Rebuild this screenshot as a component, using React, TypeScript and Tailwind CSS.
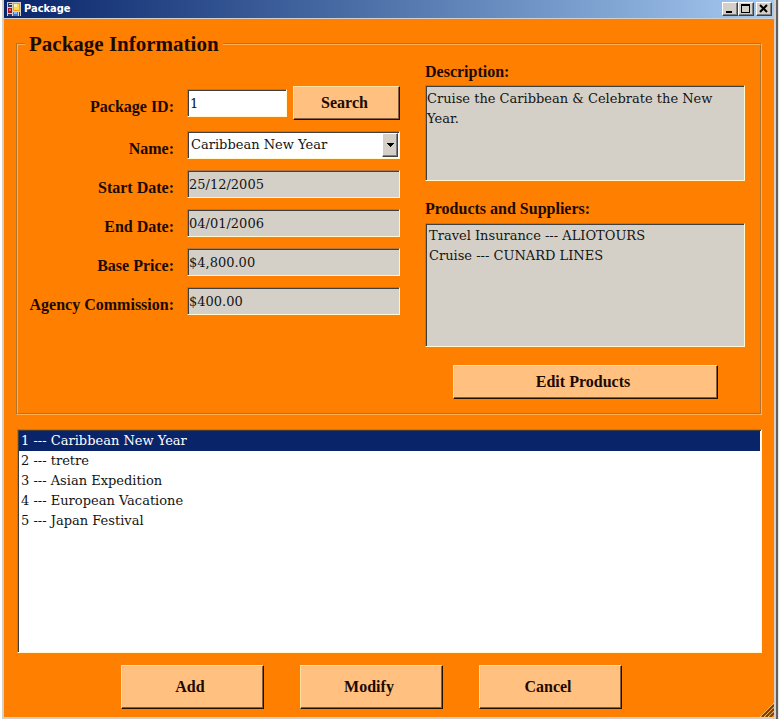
import { useState } from "react";
import type { ReactNode } from "react";

const sunken =
  "border border-t-[#b07840] border-l-[#b07840] border-r-[#fff8d0] border-b-[#fff8d0] shadow-[inset_1px_1px_0_#404040]";
const bodyText = "font-['DejaVu_Serif',serif] text-[13px] leading-5";
const labelText = "font-['Liberation_Serif',serif] text-[16px] font-bold leading-5 text-[#1c0a00]";

function PushButton({ className, children }: { className: string; children: ReactNode }) {
  return (
    <button
      type="button"
      className={`border border-t-[#ffe0a0] border-l-[#ffe0a0] border-r-[#201000] border-b-[#201000] bg-[#ffc080] pr-1 shadow-[inset_-1px_-1px_0_#806040] ${labelText} ${className}`}
    >
      {children}
    </button>
  );
}

function CaptionButton({ label, children }: { label: string; children: ReactNode }) {
  return (
    <button
      type="button"
      aria-label={label}
      className="h-3.5 w-4 border border-t-white border-l-white border-r-[#404040] border-b-[#404040] bg-[#d4d0c8] shadow-[inset_-1px_-1px_0_#808080]"
    >
      <svg viewBox="0 0 14 12" className="h-3 w-3.5" fill="none" stroke="#000" shapeRendering="crispEdges">
        {children}
      </svg>
    </button>
  );
}

function ReadOnlyRow({ id, label, value }: { id: string; label: string; value: string }) {
  return (
    <>
      <label htmlFor={id} className={`pt-2 text-right whitespace-nowrap ${labelText}`}>
        {label}
      </label>
      <input
        id={id}
        readOnly
        defaultValue={value}
        className={`h-7 w-full bg-[#d4d0c8] px-px text-[#141414] ${sunken} ${bodyText}`}
      />
    </>
  );
}

const packages = ["Caribbean New Year", "tretre", "Asian Expedition", "European Vacatione", "Japan Festival"];

export default function App() {
  const [selected, setSelected] = useState(0);

  return (
    <div className="flex min-h-screen bg-white text-[#141414]">
      <div className="flex flex-1 flex-col border-r-2 border-[#606060] bg-[#d4d0c8] pr-0.5 pb-0.5 pl-1 shadow-[inset_2px_0_0_#fff]">
        <header className="flex h-[18px] items-center bg-linear-to-r from-[#0a246a] to-[#a6caf0] pr-0.5 pl-[3px]">
          <svg viewBox="0 0 14 14" className="mr-[3px] size-3.5" shapeRendering="crispEdges" aria-hidden="true">
            <rect width="14" height="14" fill="#d4d0c8" />
            <rect x="1" y="1" width="4" height="4" fill="#26386e" />
            <rect x="2" y="2" width="3" height="1" fill="#d4d0c8" />
            <rect x="6" y="1" width="7" height="8" fill="#f0a010" />
            <rect x="7" y="2" width="5" height="6" fill="#ffd850" />
            <rect x="7" y="2" width="3" height="3" fill="#fff0a0" />
            <rect x="1" y="6" width="4" height="5" fill="#a01818" />
            <rect x="2" y="7" width="2" height="2" fill="#e86050" />
            <rect x="6" y="10" width="5" height="4" fill="#4078d8" />
            <rect x="7" y="10" width="3" height="2" fill="#90b8f8" />
            <rect x="1" y="12" width="4" height="2" fill="#26386e" />
            <rect x="12" y="10" width="1" height="4" fill="#26386e" />
          </svg>
          <h1 className="flex-1 font-['DejaVu_Sans_Condensed','DejaVu_Sans',sans-serif] text-[11px] leading-4 font-bold text-white">
            Package
          </h1>
          <CaptionButton label="Minimize">
            <path d="M3 9h6" strokeWidth="2" />
          </CaptionButton>
          <CaptionButton label="Maximize">
            <path d="M2.5 2v8M10.5 2v8M2 9.5h9" />
            <path d="M2 2h9" strokeWidth="2" />
          </CaptionButton>
          <span className="w-0.5" />
          <CaptionButton label="Close">
            <path d="M3 2l7 7M10 2l-7 7" strokeWidth="2" shapeRendering="auto" />
          </CaptionButton>
        </header>

        <main className="relative mt-px flex flex-1 flex-col bg-[#ff8000] pt-[11px] pr-3 pb-2 pl-3">
          <fieldset className="flex border-2 border-[#ffb050] pr-[15px] pb-3.5 [border-style:groove]">
            <legend className="ml-[7px] px-1 font-['Liberation_Serif',serif] text-[21px] leading-7 font-bold text-[#1c0a00]">
              Package Information
            </legend>

            <div className="grid grid-cols-[156px_213px] content-start items-center gap-x-[13px] gap-y-[11px] pt-7">
              <label htmlFor="package-id" className={`pt-2 text-right ${labelText}`}>
                Package ID:
              </label>
              <div className="flex items-center gap-1.5">
                <input
                  id="package-id"
                  defaultValue="1"
                  className={`h-7 w-0 flex-1 bg-white px-0.5 ${sunken} ${bodyText}`}
                />
                <PushButton className="h-[34px] w-[107px]">Search</PushButton>
              </div>

              <label htmlFor="package-name" className={`pt-2 text-right ${labelText}`}>
                Name:
              </label>
              <div className="relative">
                <select
                  id="package-name"
                  value={selected}
                  onChange={(e) => setSelected(Number(e.target.value))}
                  className={`block h-7 w-full appearance-none bg-white pr-5 pl-[3px] ${sunken} ${bodyText}`}
                >
                  {packages.map((name, i) => (
                    <option key={name} value={i}>
                      {name}
                    </option>
                  ))}
                </select>
                <span className="pointer-events-none absolute top-0.5 right-0.5 bottom-0.5 flex w-4 items-center justify-center border border-t-white border-l-white border-r-[#404040] border-b-[#404040] bg-[#d4d0c8] shadow-[inset_-1px_-1px_0_#808080]">
                  <svg viewBox="0 0 7 4" className="h-1 w-[7px]" shapeRendering="crispEdges" aria-hidden="true">
                    <path d="M0 0h7L3.5 4z" fill="#000" />
                  </svg>
                </span>
              </div>

              <ReadOnlyRow id="start-date" label="Start Date:" value="25/12/2005" />
              <ReadOnlyRow id="end-date" label="End Date:" value="04/01/2006" />
              <ReadOnlyRow id="base-price" label="Base Price:" value="$4,800.00" />
              <ReadOnlyRow id="commission" label="Agency Commission:" value="$400.00" />
            </div>

            <div className="ml-[25px] flex min-w-0 flex-1 flex-col pt-1">
              <label htmlFor="description" className={`mb-[3px] ${labelText}`}>
                Description:
              </label>
              <textarea
                id="description"
                readOnly
                defaultValue="Cruise the Caribbean & Celebrate the New Year."
                className={`block h-24 w-full resize-none bg-[#d4d0c8] px-px py-[3px] ${sunken} ${bodyText}`}
              />
              <h2 id="products-label" className={`mt-[18px] mb-1 ${labelText}`}>
                Products and Suppliers:
              </h2>
              <ul
                aria-labelledby="products-label"
                className={`h-[124px] bg-[#d4d0c8] px-[3px] py-0.5 ${sunken} ${bodyText}`}
              >
                <li>Travel Insurance --- ALIOTOURS</li>
                <li>Cruise --- CUNARD LINES</li>
              </ul>
              <PushButton className="mt-[18px] h-[34px] w-[265px] self-center">Edit Products</PushButton>
            </div>
          </fieldset>

          <ul
            role="listbox"
            aria-label="Packages"
            className={`mt-3.5 ml-px flex-1 bg-white p-px ${sunken} ${bodyText}`}
          >
            {packages.map((name, i) => (
              <li
                key={name}
                role="option"
                aria-selected={i === selected}
                onClick={() => setSelected(i)}
                className={i === selected ? "bg-[#0a246a] px-0.5 text-white" : "px-0.5"}
              >
                {i + 1} --- {name}
              </li>
            ))}
          </ul>

          <div className="mt-3 flex justify-center gap-9 pr-9">
            <PushButton className="h-11 w-[143px]">Add</PushButton>
            <PushButton className="h-11 w-[143px]">Modify</PushButton>
            <PushButton className="h-11 w-[143px]">Cancel</PushButton>
          </div>

          <svg
            viewBox="0 0 14 14"
            className="absolute right-0 bottom-0 size-3.5"
            fill="none"
            aria-hidden="true"
          >
            <path d="M0 14L14 0M4 14L14 4M8 14L14 8" stroke="#ffc070" />
            <path d="M2 14L14 2M6 14L14 6M10 14L14 10" stroke="#804000" strokeWidth="2" />
          </svg>
        </main>
      </div>
      <div className="w-px bg-[#e8e8e8]" />
    </div>
  );
}
